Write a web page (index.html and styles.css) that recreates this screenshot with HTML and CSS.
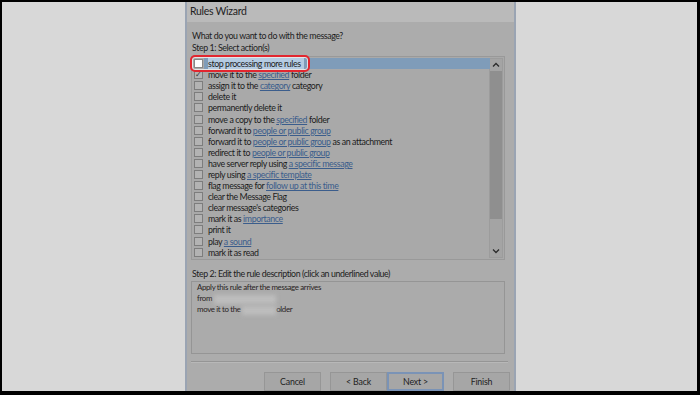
FILE: index.html
```html
<!DOCTYPE html>
<html lang="en">
<head>
    <meta charset="UTF-8">
    <title>Rules Wizard</title>
    <link rel="stylesheet" href="styles.css">
</head>
<body>
    <div class="frame">
        <div class="dialog">
            <div class="title">Rules Wizard</div>
            <div class="content">
                <div class="question">What do you want to do with the message?</div>
                <div class="label">Step 1: Select action(s)</div>

                <div class="listbox">
                    <div class="rows">
                        <div class="row selected"><span class="box"></span><span class="sel-text">stop processing more rules</span></div>
                        <div class="row"><span class="box checked">&#10003;</span>move it to the <a>specified</a> folder</div>
                        <div class="row"><span class="box"></span>assign it to the <a>category</a> category</div>
                        <div class="row"><span class="box"></span>delete it</div>
                        <div class="row"><span class="box"></span>permanently delete it</div>
                        <div class="row"><span class="box"></span>move a copy to the <a>specified</a> folder</div>
                        <div class="row"><span class="box"></span>forward it to <a>people or public group</a></div>
                        <div class="row"><span class="box"></span>forward it to <a>people or public group</a> as an attachment</div>
                        <div class="row"><span class="box"></span>redirect it to <a>people or public group</a></div>
                        <div class="row"><span class="box"></span>have server reply using <a>a specific message</a></div>
                        <div class="row"><span class="box"></span>reply using <a>a specific template</a></div>
                        <div class="row"><span class="box"></span>flag message for <a>follow up at this time</a></div>
                        <div class="row"><span class="box"></span>clear the Message Flag</div>
                        <div class="row"><span class="box"></span>clear message's categories</div>
                        <div class="row"><span class="box"></span>mark it as <a>importance</a></div>
                        <div class="row"><span class="box"></span>print it</div>
                        <div class="row"><span class="box"></span>play <a>a sound</a></div>
                        <div class="row"><span class="box"></span>mark it as read</div>
                    </div>
                    <div class="scrollbar">
                        <div class="arrow">
                            <svg width="8" height="6" viewBox="0 0 8 6"><path d="M1 4.5 L4 1.5 L7 4.5" fill="none" stroke="#2b2b2b" stroke-width="1.3"/></svg>
                        </div>
                        <div class="track"><div class="thumb"></div></div>
                        <div class="arrow">
                            <svg width="8" height="6" viewBox="0 0 8 6"><path d="M1 1.5 L4 4.5 L7 1.5" fill="none" stroke="#2b2b2b" stroke-width="1.3"/></svg>
                        </div>
                    </div>
                    <div class="highlight"></div>
                    <div class="callout"></div>
                </div>

                <div class="label step2">Step 2: Edit the rule description (click an underlined value)</div>
                <div class="description">
                    <div>Apply this rule after the message arrives</div>
                    <div>from <span class="blur wide"></span></div>
                    <div>move it to the <span class="blur"></span>older</div>
                </div>

                <div class="separator"></div>

                <div class="buttons">
                    <button class="btn">Cancel</button>
                    <div class="pair">
                        <button class="btn">&lt; Back</button>
                        <button class="btn default">Next &gt;</button>
                    </div>
                    <button class="btn">Finish</button>
                </div>
            </div>
        </div>
    </div>
</body>
</html>
```

FILE: styles.css
```css
html, body {
    margin: 0;
    height: 100%;
}
body {
    background-color: #000;
    font-family: 'Lato', sans-serif;
    color: #1c1c1c;
    overflow: hidden;
}
.frame {
    position: absolute;
    top: 2px;
    left: 2px;
    right: 3px;
    bottom: 4px;
    background-color: #d8d8d8;
    overflow: hidden;
    padding-left: 183px;
}
.dialog {
    width: 327px;
    height: 400px;
    background-color: #acacac;
    border-left: 2px solid #9aa4b3;
    border-right: 2px solid #9aa4b3;
}
.title {
    height: 20px;
    line-height: 18px;
    font-size: 10.5px;
    letter-spacing: -0.3px;
    padding-left: 3px;
    background-color: #bababa;
    color: #222;
}
.content {
    padding: 8px 0 0 4px;
    font-size: 8.8px;
    letter-spacing: -0.4px;
}
.question {
    height: 12px;
    line-height: 12px;
    padding-left: 1px;
}
.label {
    height: 12px;
    line-height: 12px;
    padding-left: 1px;
}
.listbox {
    position: relative;
    width: 312px;
    height: 202px;
    margin-top: 2px;
    border: 1px solid #999;
    background-color: #a9a9a9;
    display: flex;
}
.rows {
    flex: 1;
    padding-top: 1px;
}
.row {
    display: flex;
    align-items: center;
    height: 11.1px;
    white-space: pre;
    position: relative;
    z-index: 2;
}
.row a {
    color: #3b5d8c;
    text-decoration: underline;
}
.box {
    width: 7px;
    height: 7px;
    border: 1px solid #7d7d7d;
    background-color: #b3b3b3;
    margin: 0 5px 0 2px;
    font-size: 8px;
    line-height: 7px;
    letter-spacing: 0;
    text-align: center;
    color: #333;
}
.selected .box {
    background-color: #fdfdfd;
    border-color: #888;
}
.sel-text {
    background-color: #b4cbe2;
    padding-right: 3px;
}
.highlight {
    position: absolute;
    left: 12px;
    top: 1px;
    width: 286px;
    height: 11px;
    background-color: #7f9cb9;
    z-index: 1;
}
.callout {
    position: absolute;
    left: -2px;
    top: -2px;
    width: 116px;
    height: 13px;
    border: 2px solid #e2262f;
    border-radius: 5px;
    box-shadow: inset 0 0 0 1px rgba(255, 255, 255, 0.7);
    z-index: 3;
}
.scrollbar {
    width: 12px;
    margin: 1px 1px 1px 0;
    border: 1px solid #9c9c9c;
    background-color: #a4a4a4;
    display: flex;
    flex-direction: column;
}
.arrow {
    height: 12px;
    display: flex;
    align-items: center;
    justify-content: center;
}
.track {
    flex: 1;
    padding-bottom: 27px;
}
.thumb {
    height: 148px;
    background-color: #8f8f8f;
}
.step2 {
    margin-top: 8px;
}
.description {
    width: 303px;
    height: 67px;
    margin-top: 1px;
    padding: 0 4px 4px 5px;
    border: 1px solid #959595;
    background-color: #ababab;
    font-size: 7.9px;
    letter-spacing: -0.35px;
    line-height: 11px;
    color: #2a1f1f;
}
.blur {
    display: inline-block;
    width: 34px;
    height: 9px;
    vertical-align: middle;
    background-color: #bdbdbd;
    filter: blur(2px);
}
.blur.wide {
    width: 62px;
}
.separator {
    width: 317px;
    height: 1px;
    margin-top: 7px;
    background-color: #959595;
    border-bottom: 1px solid #b8b8b8;
}
.buttons {
    display: flex;
    gap: 9px;
    margin: 9px 0 0 73px;
}
.pair {
    display: flex;
}
.btn {
    width: 57px;
    height: 19px;
    padding: 0;
    font-family: 'Lato', sans-serif;
    font-size: 8.8px;
    letter-spacing: -0.2px;
    color: #222;
    background-color: #a6a6a6;
    border: 1px solid #969696;
}
.btn.default {
    border: 2px solid #7a93b6;
}
```
